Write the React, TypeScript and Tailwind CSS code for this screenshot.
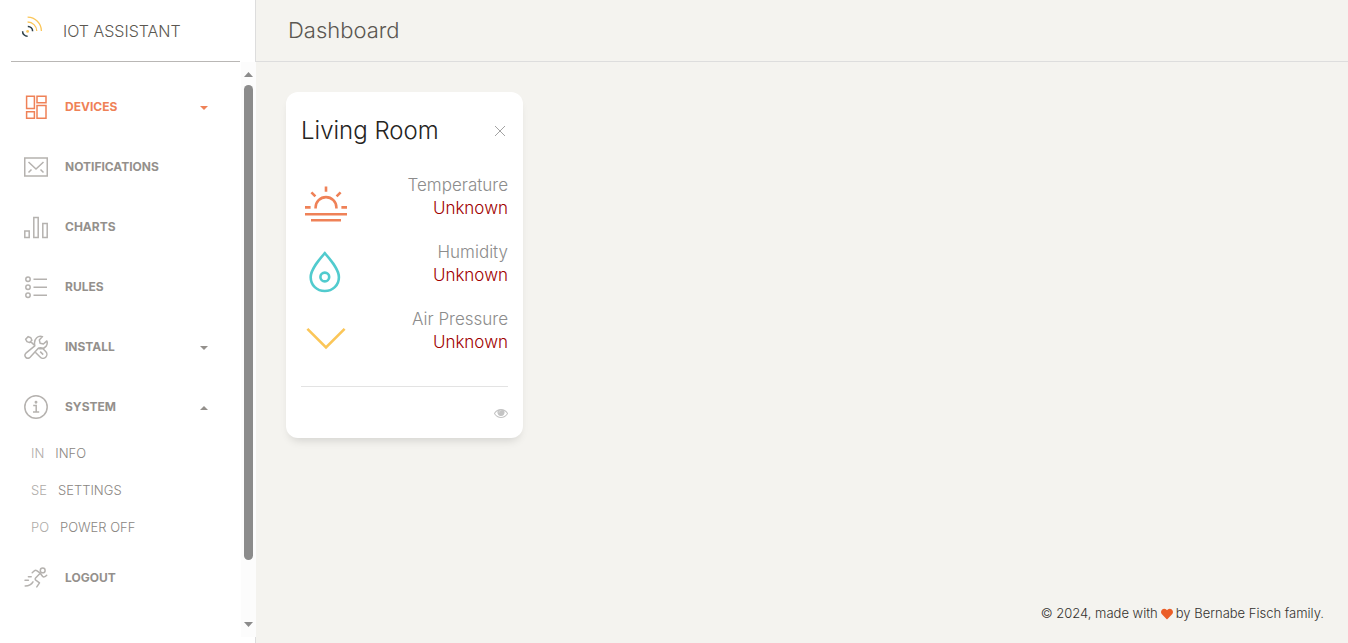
import type { ReactNode } from "react";
import { FaHeart } from "react-icons/fa";

function Icon({ children }: { children: ReactNode }) {
  return (
    <svg
      viewBox="0 0 24 24"
      className="size-6 shrink-0"
      fill="none"
      stroke="currentColor"
      strokeWidth="1.5"
      aria-hidden="true"
    >
      {children}
    </svg>
  );
}

const icons = {
  devices: (
    <Icon>
      <path d="M2.600 1.200h7.800v12.400H2.600zM13 1.200h9v6.600h-9zM13 10.600h9v12.600h-9zM2.600 16.800h7.800v6.400H2.600z" />
    </Icon>
  ),
  notifications: (
    <Icon>
      <path d="M.75 3h22.5v18H.75zM4.500 7l7.500 7 7.500-7M4.500 17.500l3-3M19.500 17.500l-3-3" />
    </Icon>
  ),
  charts: (
    <Icon>
      <path d="M.8 16h4.400v6.600H.8zM9.800 2.400h4.400v20.200H9.800zM18.800 8.600h4.400v14h-4.400z" />
    </Icon>
  ),
  rules: (
    <Icon>
      <circle cx="4" cy="4.200" r="2.200" />
      <circle cx="4" cy="12.200" r="2.200" />
      <circle cx="4" cy="20.200" r="2.200" />
      <path d="M9.500 4.200H23M9.500 12.200H23M9.500 20.200H23" />
    </Icon>
  ),
  install: (
    <Icon>
      <path strokeLinejoin="round" d="M4.200 1.600 6.800 2.700l1.100 2.600-2.300 2.300L3 6.600 1.600 4.200zM6.600 6.600l4.100 3.900" />
      <path
        strokeLinejoin="round"
        d="M10.800 10.800 1.900 18.200a3.100 3.100 0 0 0-.1 4.200 3.100 3.100 0 0 0 4.300-.1l8.200-9.100c3 .9 6.200.2 7.800-2 1.200-1.600 1.400-3.500.8-5.300L19.400 9l-3.300-.8-.8-3.300 3.200-3.300c-2-.7-4.200-.4-5.800 1.100-1.900 1.700-2.600 5-1.900 8.100z"
      />
      <path
        strokeLinejoin="round"
        d="m11.300 17.200 4.800 4.900c1.600 1.600 4.100 1.600 5.600.1 1.600-1.600 1.600-4.100 0-5.700l-3-3c-1-.9-2.900-.9-4.200-.4M16.200 16.600l3 3"
      />
    </Icon>
  ),
  system: (
    <Icon>
      <circle cx="12" cy="12" r="11.200" />
      <path d="M9.200 10.500h3v6.600M9 17.100h6.200" />
      <circle cx="12" cy="7.200" r=".7" fill="currentColor" />
    </Icon>
  ),
  logout: (
    <Icon>
      <g strokeLinecap="round" strokeLinejoin="round">
        <circle cx="18.700" cy="4.400" r="2.400" />
        <path d="M8.200 6.800 10.400 4.800a2 2 0 0 1 2.300-.1l3.500 2.500-4.600 4.800a1.500 1.500 0 0 0 .2 2.200l3.700 2.600-2.700 4.100M16.200 7.200l2.300 3.100c1 1.100 2.300.8 4.200-1M9 15.800c-1.600 2.800-3.300 4-7.800 4.200M4.400 10.800h2.800M1 14.200h3.400" />
      </g>
    </Icon>
  ),
};

type NavItem = {
  label: string;
  icon: ReactNode;
  caret?: "down" | "up";
  active?: boolean;
  children?: { short: string; label: string }[];
};

const nav: NavItem[] = [
  { label: "DEVICES", icon: icons.devices, caret: "down", active: true },
  { label: "NOTIFICATIONS", icon: icons.notifications },
  { label: "CHARTS", icon: icons.charts },
  { label: "RULES", icon: icons.rules },
  { label: "INSTALL", icon: icons.install, caret: "down" },
  {
    label: "SYSTEM",
    icon: icons.system,
    caret: "up",
    children: [
      { short: "IN", label: "INFO" },
      { short: "SE", label: "SETTINGS" },
      { short: "PO", label: "POWER OFF" },
    ],
  },
  { label: "LOGOUT", icon: icons.logout },
];

function Triangle({ up, className }: { up?: boolean; className: string }) {
  return (
    <svg viewBox="0 0 8 4" preserveAspectRatio="none" className={className} fill="currentColor" aria-hidden="true">
      <path d={up ? "M0 4 4 0l4 4z" : "M0 0h8L4 4z"} />
    </svg>
  );
}

function NavRow({ item }: { item: NavItem }) {
  return (
    <li>
      <a
        href="#"
        aria-current={item.active ? "page" : undefined}
        className={
          "flex h-[60px] items-center pr-[33px] pl-6 text-[12px] font-bold " +
          (item.active ? "text-[#ef8157]" : "text-[#94908c]")
        }
      >
        <span className={item.active ? "" : "text-[#b5b2af]"}>{item.icon}</span>
        <span className="ml-[17px] grow">{item.label}</span>
        {item.caret && <Triangle up={item.caret === "up"} className="mt-px h-1 w-2" />}
      </a>
      {item.children && (
        <ul>
          {item.children.map((c) => (
            <li key={c.label}>
              <a
                href="#"
                className="flex h-[37px] items-center gap-[11px] pb-[3px] pl-[31px] text-[13px] font-light text-[#8a8682]"
              >
                <span className="text-[#aeaba8]">{c.short}</span>
                <span>{c.label}</span>
              </a>
            </li>
          ))}
        </ul>
      )}
    </li>
  );
}

function Sidebar() {
  return (
    <aside className="flex h-screen w-64 shrink-0 flex-col border-r border-[#dddddd] bg-white">
      <a
        href="#"
        className="mr-[15px] ml-[11px] flex h-[62px] shrink-0 items-center border-b border-[#b9b7b5] pl-[10px]"
      >
        <svg viewBox="0 0 24 24" className="mb-1.5 size-6" fill="none" strokeWidth="1.300" aria-hidden="true">
          <g stroke="#fbc658">
            <path d="M6.600 1.200A13.800 13.800 0 0 1 20.400 15" />
            <path d="M6.600 6A9.200 9.200 0 0 1 15.800 15" />
          </g>
          <g stroke="#2c3e46" strokeWidth="1.500">
            <path d="M6.800 10.400a4.600 4.600 0 0 1 4.800 4.800" />
            <path d="M1.600 15.200a4.800 4.800 0 0 0 5 5" />
          </g>
          <circle cx="6.600" cy="15.400" r="1.400" fill="#fbc658" />
        </svg>
        <span className="ml-[18px] text-[16px] font-light text-[#5b5751]">IOT ASSISTANT</span>
      </a>
      <div className="-mr-px mb-1.5 flex min-h-0 grow">
        <nav className="min-w-0 grow overflow-hidden pt-[15px]">
          <ul>
            {nav.map((item) => (
              <NavRow key={item.label} item={item} />
            ))}
          </ul>
        </nav>
        <div className="flex w-[15px] shrink-0 flex-col items-center bg-[#fcfcfc] py-[10px] text-[#8b8b8b]">
          <Triangle up className="h-[5px] w-[9px]" />
          <div className="flex min-h-0 grow flex-col pt-2 pb-[9px]">
            <div className="h-[90%] w-[9px] rounded-full bg-[#8b8b8b]" />
          </div>
          <Triangle className="h-[5px] w-[9px]" />
        </div>
      </div>
    </aside>
  );
}

const readings = [
  {
    label: "Temperature",
    color: "text-[#ef8157]",
    drawing: (
      <path d="M4 40.200h42M10 46.200h30M4 33.400h5.600M40.400 33.400H46M14.600 34.600v-1.100a10.400 10.400 0 0 1 20.800 0v1.100M25 12.600v5.200M10.400 18.300l4 4M39.600 18.300l-4 4" />
    ),
  },
  {
    label: "Humidity",
    color: "text-[#51cbce]",
    drawing: (
      <>
        <path d="M23.800 12.200C18 19 9.700 28 9.700 36.200c0 8 6.200 13.800 14.100 13.800s14.100-5.800 14.100-13.800C37.900 28 29.600 19 23.800 12.200z" />
        <circle cx="23.800" cy="36" r="4.400" />
      </>
    ),
  },
  {
    label: "Air Pressure",
    color: "text-[#fbc658]",
    drawing: <path d="m6.400 20.800 18.600 18.600 18.600-18.600" />,
  },
];

function EyeIcon() {
  return (
    <svg viewBox="0 0 1792 1792" className="size-[14px]" fill="currentColor" aria-hidden="true">
      <path d="M1664 960q-152-236-381-353 61 104 61 225 0 185-131.500 316.500t-316.500 131.500-316.500-131.500-131.500-316.500q0-121 61-225-229 117-381 353 133 205 333.500 326.500t434.500 121.500 434.500-121.500 333.500-326.500zm-720-384q0-20-14-34t-34-14q-125 0-214.500 89.500t-89.500 214.500q0 20 14 34t34 14 34-14 14-34q0-86 61-147t147-61q20 0 34-14t14-34zm848 384q0 34-20 69-140 230-376.500 368.500t-499.500 138.500-499.500-139-376.500-368q-20-35-20-69t20-69q140-229 376.500-368t499.500-139 499.500 139 376.500 368q20 35 20 69z" />
      <circle cx="896" cy="832" r="420" opacity=".6" />
    </svg>
  );
}

function RoomCard() {
  return (
    <section className="rounded-xl bg-white px-[15px] pt-[23px] shadow-[0_6px_10px_-4px_rgba(0,0,0,0.15)]">
      <div className="flex h-8 items-center justify-between">
        <h2 className="text-[24px] font-light text-[#252422]">Living Room</h2>
        <button type="button" aria-label="Remove Living Room" className="mr-[2px] text-[#a3a3a3]">
          <svg viewBox="0 0 12 12" className="size-3" fill="none" stroke="currentColor" aria-hidden="true">
            <path d="m1 1 10 10M11 1 1 11" />
          </svg>
        </button>
      </div>
      <dl className="pt-[27px]">
        {readings.map((r) => (
          <div key={r.label} className="flex h-[67px] items-start justify-between">
            <svg
              viewBox="0 0 48 56"
              className={"h-14 w-12 shrink-0 " + r.color}
              fill="none"
              stroke="currentColor"
              strokeWidth="2.600"
              aria-hidden="true"
            >
              {r.drawing}
            </svg>
            <div className="text-right text-[17px] leading-[23px] font-light">
              <dt className="text-[#8c8c8c]">{r.label}</dt>
              <dd className="text-[#a00000]">Unknown</dd>
            </div>
          </div>
        ))}
      </dl>
      <div className="mt-[11px] flex h-[52px] items-center justify-end border-t border-[#e3e3e3]">
        <button type="button" aria-label="Show details" className="text-[#c4c4c4]">
          <EyeIcon />
        </button>
      </div>
    </section>
  );
}

export default function App() {
  return (
    <div className="flex min-h-screen bg-[#f4f3ef] font-['Inter','Liberation_Sans',sans-serif]">
      <Sidebar />
      <div className="flex min-w-0 grow flex-col">
        <header className="flex h-[62px] items-center border-b border-[#dddddd] px-8">
          <h1 className="text-[22px] font-light text-[#5b5751]">Dashboard</h1>
        </header>
        <main className="grid grow grid-cols-4 items-start gap-7 p-[30px]">
          <RoomCard />
        </main>
        <footer className="flex h-[59px] items-center justify-end gap-[3px] px-6 text-[13px] font-light text-[#33312e]">
          <span>© 2024, made with</span>
          <FaHeart className="size-3 text-[#eb5e28]" role="img" aria-label="love" />
          <span>by Bernabe Fisch family.</span>
        </footer>
      </div>
    </div>
  );
}
